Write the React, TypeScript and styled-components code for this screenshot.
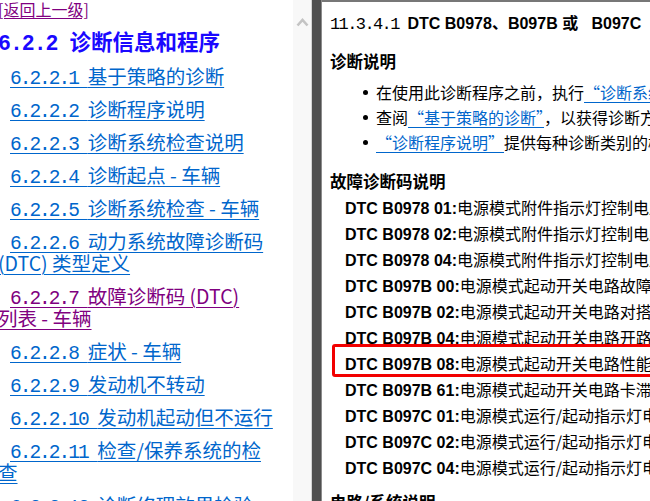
import React from 'react';
import styled, { createGlobalStyle } from 'styled-components';

const Global = createGlobalStyle`
  html, body { margin: 0; padding: 0; background: #fff; overflow: hidden; }
  #root { width: 650px; height: 501px; }
`;

const CJK = `"Noto Sans CJK SC", "Noto Sans", sans-serif`;

const Frame = styled.div`
  display: flex;
  width: 650px;
  height: 501px;
  overflow: hidden;
  background: #fff;
`;

const LeftPane = styled.div`
  width: 293px;
  flex: none;
  overflow: hidden;
`;

const LeftContent = styled.div`
  margin-left: -2px;
  font-family: ${CJK};
  font-size: 19.5px;
`;

const BackLink = styled.a`
  display: block;
  font-size: 16px;
  line-height: 18px;
  color: #800080;
  text-decoration: underline;
  text-underline-offset: 2px;
  white-space: nowrap;
`;

const Num = styled.span<{ $size?: number; $spacing?: number }>`
  font-family: "Liberation Mono", monospace;
  font-size: ${(p) => (p.$size ? `${p.$size}px` : 'inherit')};
  letter-spacing: ${(p) => p.$spacing ?? -2}px;
  line-height: 0;
`;

const ChapterTitle = styled.h2`
  margin: 9px 0 8px;
  height: 27px;
  font-size: 21.5px;
  line-height: 27px;
  font-weight: bold;
  color: #1a08ff;
  white-space: nowrap;
`;

const Item = styled.p`
  margin: 11px 0;
  line-height: 22px;
  text-indent: 12px;
  white-space: nowrap;
`;

const ItemLink = styled.a<{ $visited?: boolean }>`
  color: ${(p) => (p.$visited ? '#800080' : '#0066cc')};
  text-decoration: underline;
  text-decoration-thickness: 1px;
  text-underline-offset: 3px;
`;

const Scrollbar = styled.div`
  width: 18px;
  flex: none;
  background: #f8f8f8;
  display: flex;
  justify-content: center;
  padding-top: 18px;
  box-sizing: border-box;
`;

const Splitter = styled.div`
  width: 11px;
  flex: none;
  box-sizing: border-box;
  background: #505050;
  border-left: 1px solid #d4d4d4;
  border-right: 1px solid #8c8c8c;
`;

const RightPane = styled.div`
  flex: 1;
  min-width: 0;
  overflow: hidden;
  border-top: 2px solid #777;
  padding-left: 8px;
  font-family: ${CJK};
  font-size: 16px;
  color: #000;
`;

const DocTitle = styled.div`
  margin-top: 8px;
  height: 24px;
  line-height: 24px;
  white-space: nowrap;
`;

const TitleBold = styled.span`
  font-family: "Liberation Sans", "Noto Sans CJK SC", sans-serif;
  font-weight: bold;
  font-size: 16px;
  line-height: 0;
`;

const SectionHeading = styled.div<{ $top: number }>`
  margin-top: ${(p) => p.$top}px;
  font-weight: bold;
  font-size: 16.5px;
  line-height: 24px;
  white-space: nowrap;
`;

const BulletList = styled.div`
  margin-top: 6.5px;
  padding-left: 33px;
`;

const BulletRow = styled.div`
  display: flex;
  align-items: center;
  gap: 8px;
  height: 25px;
  line-height: 25px;
  white-space: nowrap;
`;

const Dot = styled.span`
  width: 5px;
  height: 5px;
  border-radius: 50%;
  background: #000;
  flex: none;
`;

const TextLink = styled.a`
  color: #0066cc;
  text-decoration: underline;
  text-decoration-thickness: 1px;
  text-underline-offset: 3px;
`;

const DtcList = styled.div`
  margin-top: 1px;
  padding-left: 15px;
`;

const DtcRow = styled.div`
  position: relative;
  height: 26px;
  line-height: 26px;
  white-space: nowrap;
`;

const Code = styled.span`
  font-family: "Liberation Sans", sans-serif;
  font-weight: bold;
  font-size: 16px;
  line-height: 0;
`;

const Highlight = styled.span`
  position: absolute;
  left: -13px;
  top: -6px;
  bottom: -1px;
  right: -200px;
  border: 3px solid #f20000;
  border-radius: 3px;
  pointer-events: none;
`;

type Entry = { num: string; lines: string[]; visited?: boolean };

const entries: Entry[] = [
  { num: '6.2.2.1 ', lines: ['基于策略的诊断'] },
  { num: '6.2.2.2 ', lines: ['诊断程序说明'] },
  { num: '6.2.2.3 ', lines: ['诊断系统检查说明'] },
  { num: '6.2.2.4 ', lines: ['诊断起点 - 车辆'] },
  { num: '6.2.2.5 ', lines: ['诊断系统检查 - 车辆'] },
  { num: '6.2.2.6 ', lines: ['动力系统故障诊断码', '(DTC) 类型定义'] },
  { num: '6.2.2.7 ', lines: ['故障诊断码 (DTC)', '列表 - 车辆'], visited: true },
  { num: '6.2.2.8 ', lines: ['症状 - 车辆'] },
  { num: '6.2.2.9 ', lines: ['发动机不转动'] },
  { num: '6.2.2.10 ', lines: ['发动机起动但不运行'] },
  { num: '6.2.2.11 ', lines: ['检查/保养系统的检', '查'] },
  { num: '6.2.2.12 ', lines: ['诊断修理效果检验'] },
];

const dtcs: { code: string; desc: string; marked?: boolean }[] = [
  { code: 'DTC B0978 01:', desc: '电源模式附件指示灯控制电路对搭铁短路' },
  { code: 'DTC B0978 02:', desc: '电源模式附件指示灯控制电路对蓄电池短路' },
  { code: 'DTC B0978 04:', desc: '电源模式附件指示灯控制电路开路' },
  { code: 'DTC B097B 00:', desc: '电源模式起动开关电路故障' },
  { code: 'DTC B097B 02:', desc: '电源模式起动开关电路对搭铁短路' },
  { code: 'DTC B097B 04:', desc: '电源模式起动开关电路开路' },
  { code: 'DTC B097B 08:', desc: '电源模式起动开关电路性能不良', marked: true },
  { code: 'DTC B097B 61:', desc: '电源模式起动开关电路卡滞' },
  { code: 'DTC B097C 01:', desc: '电源模式运行/起动指示灯电路对搭铁短路' },
  { code: 'DTC B097C 02:', desc: '电源模式运行/起动指示灯电路对蓄电池短路' },
  { code: 'DTC B097C 04:', desc: '电源模式运行/起动指示灯电路开路' },
];

export default function App() {
  return (
    <>
      <Global />
      <Frame>
        <LeftPane>
          <LeftContent>
            <BackLink href="#">[返回上一级]</BackLink>
            <ChapterTitle>
              <Num $spacing={-1}>6.2.2 </Num>诊断信息和程序
            </ChapterTitle>
            {entries.map((e) => (
              <Item key={e.num}>
                <ItemLink href="#" $visited={e.visited}>
                  <Num>{e.num}</Num>
                  {e.lines.map((l, i) => (
                    <React.Fragment key={i}>
                      {i > 0 && <br />}
                      {l}
                    </React.Fragment>
                  ))}
                </ItemLink>
              </Item>
            ))}
          </LeftContent>
        </LeftPane>
        <Scrollbar>
          <svg width="13" height="9" viewBox="0 0 13 9">
            <path d="M1.5 7.5 L6.5 2 L11.5 7.5" fill="none" stroke="#c4c4c4" strokeWidth="2.6" />
          </svg>
        </Scrollbar>
        <Splitter />
        <RightPane>
          <DocTitle>
            <Num $size={17} $spacing={-1.6}>11.3.4.1 </Num>
            <TitleBold>{'DTC B0978、B097B\u00a0或\u00a0\u00a0\u00a0B097C'}</TitleBold>
          </DocTitle>
          <SectionHeading $top={15}>诊断说明</SectionHeading>
          <BulletList>
            <BulletRow>
              <Dot />
              <span>
                在使用此诊断程序之前，执行<TextLink href="#">“诊断系统检查 - 车辆”</TextLink>。
              </span>
            </BulletRow>
            <BulletRow>
              <Dot />
              <span>
                查阅<TextLink href="#">“基于策略的诊断”</TextLink>，以获得诊断方法的概述。
              </span>
            </BulletRow>
            <BulletRow>
              <Dot />
              <span>
                <TextLink href="#">“诊断程序说明”</TextLink>提供每种诊断类别的概述。
              </span>
            </BulletRow>
          </BulletList>
          <SectionHeading $top={14.5}>故障诊断码说明</SectionHeading>
          <DtcList>
            {dtcs.map((d) => (
              <DtcRow key={d.code}>
                <Code>{d.code}</Code>
                {d.desc}
                {d.marked && <Highlight />}
              </DtcRow>
            ))}
          </DtcList>
          <SectionHeading $top={10}>电路/系统说明</SectionHeading>
        </RightPane>
      </Frame>
    </>
  );
}
